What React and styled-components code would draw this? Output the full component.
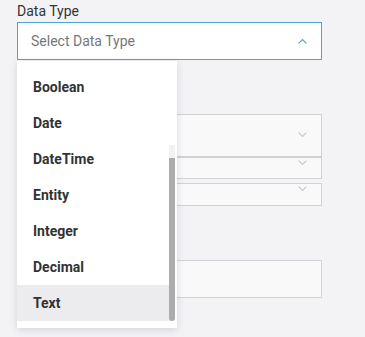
import React from "react";
import styled, { createGlobalStyle } from "styled-components";

const Global = createGlobalStyle`
  html, body { margin: 0; padding: 0; background: #f3f3f6; }
  body { font-family: Roboto, "Liberation Sans", sans-serif; }
`;

const Page = styled.div`
  box-sizing: border-box;
  width: 322px;
  min-height: 337px;
  padding: 3px 0 0 17px;
`;

const Label = styled.div`
  font-size: 14px;
  line-height: 16px;
  color: #333;
`;

const SelectWrap = styled.div`
  position: relative;
  z-index: 2;
  margin-top: 3px;
`;

const Select = styled.div`
  box-sizing: border-box;
  height: 38px;
  background: #fff;
  border: 1px solid #4ba7cb;
  display: flex;
  align-items: center;
  justify-content: space-between;
  padding: 0 14px 0 13px;
  font-size: 14px;
  color: #777;
`;

const Menu = styled.div`
  position: absolute;
  top: calc(100% + 1px);
  left: 0;
  width: 160px;
  height: 267px;
  background: #fff;
  box-shadow: 0 2px 7px rgba(60, 80, 100, 0.18);
  display: flex;
`;

const List = styled.ul`
  list-style: none;
  margin: 0;
  padding: 8px 0 0;
  flex: 1;
`;

const Item = styled.li`
  height: 36px;
  display: flex;
  align-items: center;
  padding-left: 16px;
  font-size: 14px;
  font-weight: 700;
  color: #333;
  background: ${(p) => (p.$active ? "#ececee" : "transparent")};
`;

const Scroll = styled.div`
  width: 6px;
  margin: 84px 2px 0 0;
  height: 176px;
  background: #f1f1f1;
  display: flex;
  flex-direction: column;
  justify-content: flex-end;
`;

const Thumb = styled.div`
  height: 163px;
  background: #acacac;
  border-radius: 0 0 3px 3px;
`;

const Fields = styled.div`
  margin-top: 54px;
  display: flex;
  flex-direction: column;
`;

const Box = styled.div`
  box-sizing: border-box;
  height: ${(p) => p.$h}px;
  margin-top: ${(p) => p.$mt || 0}px;
  background: #f9f9fa;
  border: 1px solid #d2d2d6;
  display: flex;
  justify-content: flex-end;
  align-items: flex-start;
  padding: ${(p) => p.$ct}px 14px 0 0;
`;

const Chevron = ({ up, color }) => (
  <svg width="9" height="5" viewBox="0 0 9 5" style={{ display: "block" }}>
    <polyline
      points={up ? "0.6,4.4 4.5,0.6 8.4,4.4" : "0.6,0.6 4.5,4.4 8.4,0.6"}
      fill="none"
      stroke={color}
      strokeWidth="1.2"
    />
  </svg>
);

const items = ["Boolean", "Date", "DateTime", "Entity", "Integer", "Decimal", "Text"];

export default function App() {
  return (
    <>
      <Global />
      <Page>
        <Label>Data Type</Label>
        <SelectWrap>
          <Select>
            <span>Select Data Type</span>
            <Chevron up color="#4ba7cb" />
          </Select>
          <Menu>
            <List>
              {items.map((t) => (
                <Item key={t} $active={t === "Text"}>
                  {t}
                </Item>
              ))}
            </List>
            <Scroll>
              <Thumb />
            </Scroll>
          </Menu>
        </SelectWrap>
        <Fields>
          <Box $h={43} $ct={17}>
            <Chevron color="#c8c8cc" />
          </Box>
          <Box $h={22} $ct={2}>
            <Chevron color="#c8c8cc" />
          </Box>
          <Box $h={23} $mt={4} $ct={2}>
            <Chevron color="#c8c8cc" />
          </Box>
          <Box $h={38} $mt={54} $ct={0} />
        </Fields>
      </Page>
    </>
  );
}
